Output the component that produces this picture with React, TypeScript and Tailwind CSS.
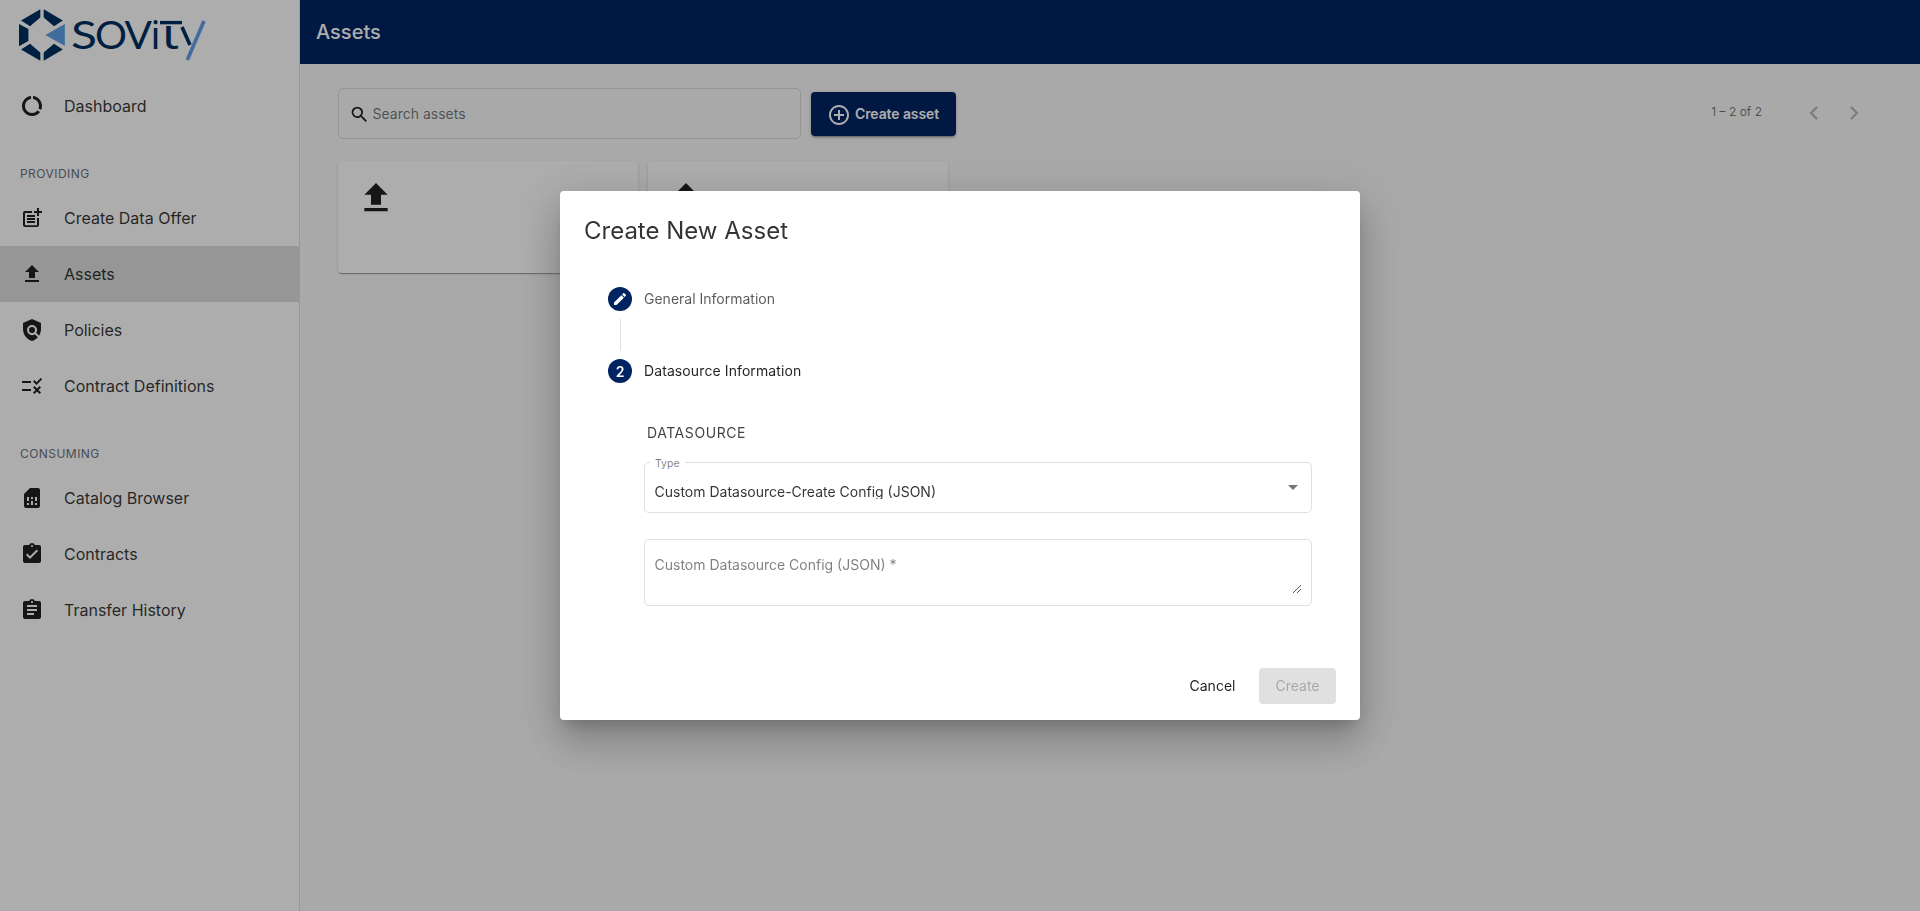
import type { ReactNode } from 'react';
import type { IconType } from 'react-icons';
import {
  MdAddCircleOutline,
  MdArrowDropDown,
  MdAssignment,
  MdAssignmentTurnedIn,
  MdChevronLeft,
  MdChevronRight,
  MdCreate,
  MdDataUsage,
  MdFileUpload,
  MdPolicy,
  MdPostAdd,
  MdRule,
  MdSearch,
  MdSimCard,
} from 'react-icons/md';

function Logo() {
  return (
    <svg width="194" height="70" viewBox="16 0 194 70" className="ml-4 block" aria-label="sovity">
      <g fill="#003060">
        <path d="M40.3 9.3V17.6L30 26.3 21 20.6Z" />
        <path d="M43.7 9.3V17.6L54 26.3 62.8 20.6Z" />
        <path d="M19 24 28.4 29V41L19 46.2Z" />
        <path d="M40.3 60.7V52.4L30 43.7 21 49.4Z" />
        <path d="M43.7 60.7V52.4L54 43.7 62.8 49.4Z" />
      </g>
      <path d="M64.8 24V46L45.4 35Z" fill="#609fe8" />
      <g fill="#003060" fontFamily="Lato, sans-serif" fontSize="39">
        <text x="71" y="49" textLength="26" lengthAdjust="spacingAndGlyphs">S</text>
        <text x="95" y="49" textLength="32" lengthAdjust="spacingAndGlyphs">O</text>
        <text x="124.5" y="49" textLength="27.5" lengthAdjust="spacingAndGlyphs">V</text>
        <text x="150.6" y="49" fontFamily="'Noto Sans', sans-serif" fontSize="38" textLength="10" lengthAdjust="spacingAndGlyphs">i</text>
        <text x="162" y="49" fontFamily="'Noto Sans', sans-serif" fontSize="42" textLength="17" lengthAdjust="spacingAndGlyphs">ι</text>
      </g>
      <line x1="160" y1="22.6" x2="182" y2="22.6" stroke="#003060" strokeWidth="3.4" />
      <line x1="182" y1="27" x2="190" y2="45" stroke="#003060" strokeWidth="3.6" />
      <line x1="204" y1="21" x2="187.3" y2="60" stroke="#609fe8" strokeWidth="3.6" />
    </svg>
  );
}

function NavItem({ icon: Icon, label, active }: { icon: IconType; label: string; active?: boolean }) {
  return (
    <a className={`flex h-14 items-center gap-5 pl-5 text-[16px] font-normal text-black/80 ${active ? 'bg-[#dedede]' : ''}`}>
      <Icon className="size-6 text-[#212121]" />
      <span>{label}</span>
    </a>
  );
}

function NavHeading({ children }: { children: ReactNode }) {
  return (
    <h3 className="mt-6 flex h-8 items-center pl-5 text-[12px] font-normal tracking-[0.45px] text-[#6b7280]">
      {children}
    </h3>
  );
}

function Sidebar() {
  return (
    <aside className="flex h-full w-[300px] shrink-0 flex-col border-r border-black/12 bg-white">
      <div className="h-[78px]">
        <Logo />
      </div>
      <NavItem icon={MdDataUsage} label="Dashboard" />
      <NavHeading>PROVIDING</NavHeading>
      <NavItem icon={MdPostAdd} label="Create Data Offer" />
      <NavItem icon={MdFileUpload} label="Assets" active />
      <NavItem icon={MdPolicy} label="Policies" />
      <NavItem icon={MdRule} label="Contract Definitions" />
      <NavHeading>CONSUMING</NavHeading>
      <NavItem icon={MdSimCard} label="Catalog Browser" />
      <NavItem icon={MdAssignmentTurnedIn} label="Contracts" />
      <NavItem icon={MdAssignment} label="Transfer History" />
    </aside>
  );
}

function AssetCard() {
  return (
    <div className="h-28 w-[300px] rounded bg-white pl-[18px] pt-[17px] shadow-[0_2px_1px_-1px_rgba(0,0,0,0.2),0_1px_1px_0_rgba(0,0,0,0.14),0_1px_3px_0_rgba(0,0,0,0.12)]">
      <MdFileUpload className="size-10 text-[#212121]" />
    </div>
  );
}

function AssetPage() {
  return (
    <main className="flex min-w-0 flex-1 flex-col bg-[#fafafa]">
      <header className="flex h-16 shrink-0 items-center bg-[#002462] pl-4 text-[20px] font-medium text-white">
        Assets
      </header>
      <div className="flex flex-col gap-[22px] pl-[38px] pr-[46px] pt-6">
        <div className="flex items-center">
          <div className="flex h-[51px] w-[463px] items-center rounded-[5px] border border-black/12 pl-[10px]">
            <MdSearch className="mt-0.5 size-[21px] text-[#212121]" />
            <span className="ml-[2.5px] text-[14px] font-normal text-black/55">Search assets</span>
          </div>
          <button className="ml-[10px] flex h-11 w-[145px] items-center rounded bg-[#002462] pl-4 text-[14px] font-semibold tracking-[-0.1px] text-white shadow-[0_3px_1px_-2px_rgba(0,0,0,0.2),0_2px_2px_0_rgba(0,0,0,0.14),0_1px_5px_0_rgba(0,0,0,0.12)]">
            <MdAddCircleOutline className="mr-1 mt-0.5 size-6" />
            Create asset
          </button>
          <div className="-mt-0.5 ml-auto flex items-center text-[12px] font-normal text-black/54">
            <span className="-mt-0.5">1 – 2 of 2</span>
            <div className="ml-8 flex text-black/26">
              <span className="flex size-10 items-center justify-center">
                <MdChevronLeft className="size-7" />
              </span>
              <span className="flex size-10 items-center justify-center">
                <MdChevronRight className="size-7" />
              </span>
            </div>
          </div>
        </div>
        <div className="flex gap-[10px]">
          <AssetCard />
          <AssetCard />
        </div>
      </div>
    </main>
  );
}

function StepBadge({ children }: { children: ReactNode }) {
  return (
    <span className="flex size-6 items-center justify-center rounded-full bg-[#002462] text-[14px] font-semibold text-white">
      {children}
    </span>
  );
}

function CreateAssetDialog() {
  return (
    <div className="flex h-[529px] w-[800px] flex-col rounded bg-white shadow-[0_11px_15px_-7px_rgba(0,0,0,0.2),0_24px_38px_3px_rgba(0,0,0,0.14),0_9px_46px_8px_rgba(0,0,0,0.12)]">
      <h2 className="h-24 pl-6 pt-6 text-[24px] font-normal leading-8 text-black/80">
        Create New Asset
      </h2>
      <div className="flex flex-col pl-12 pr-12">
        <div className="flex h-6 items-center gap-3">
          <StepBadge>
            <MdCreate className="size-4" />
          </StepBadge>
          <span className="-mt-0.5 text-[14px] font-normal text-black/65">General Information</span>
        </div>
        <div className="my-2 ml-3 h-8 w-px bg-black/12" />
        <div className="flex h-6 items-center gap-3">
          <StepBadge>2</StepBadge>
          <span className="-mt-0.5 text-[14px] font-normal tracking-[0.1px] text-black/87">Datasource Information</span>
        </div>
        <div className="flex flex-col pl-9">
          <h3 className="mt-10 pl-[3px] text-[14px] font-normal leading-5 tracking-[0.56px] text-black/75">DATASOURCE</h3>
          <div className="relative mt-[19px] flex h-[51px] items-center justify-between rounded-[5px] border border-black/12 pl-[9.5px] pr-[6px]">
            <span className="absolute left-[5px] top-[-7px] bg-white px-[5px] text-[10.5px] font-normal leading-4 text-black/50">Type</span>
            <span className="mt-[5px] h-[17px] overflow-hidden text-[14px] font-normal leading-5 text-black/80">
              Custom Datasource-Create Config (JSON)
            </span>
            <MdArrowDropDown className="-mt-0.5 size-6 text-black/54" />
          </div>
          <div className="mt-[26px] flex h-[67px] justify-between rounded-[5px] border border-black/12 pl-[9.5px] pr-[9px] pt-[15px]">
            <span className="text-[14px] font-normal leading-5 text-black/50">
              Custom Datasource Config (JSON) *
            </span>
            <svg width="10" height="10" viewBox="0 0 10 10" className="mt-[29px] stroke-[#444]" strokeWidth="0.9">
              <path d="M1 9 9 1M5 9 9 5" />
            </svg>
          </div>
        </div>
      </div>
      <div className="mb-4 mt-auto flex justify-end gap-2 pr-6 text-[14px] font-normal">
        <button className="h-9 w-[77px] pb-0.5 text-black/87">Cancel</button>
        <button className="h-9 w-[77px] rounded bg-black/12 pb-0.5 text-black/26">Create</button>
      </div>
    </div>
  );
}

export default function App() {
  return (
    <div className="flex h-[911px] w-full overflow-hidden font-['Inter',sans-serif]">
      <Sidebar />
      <AssetPage />
      <div className="fixed inset-0 flex items-center justify-center bg-black/32">
        <CreateAssetDialog />
      </div>
    </div>
  );
}
